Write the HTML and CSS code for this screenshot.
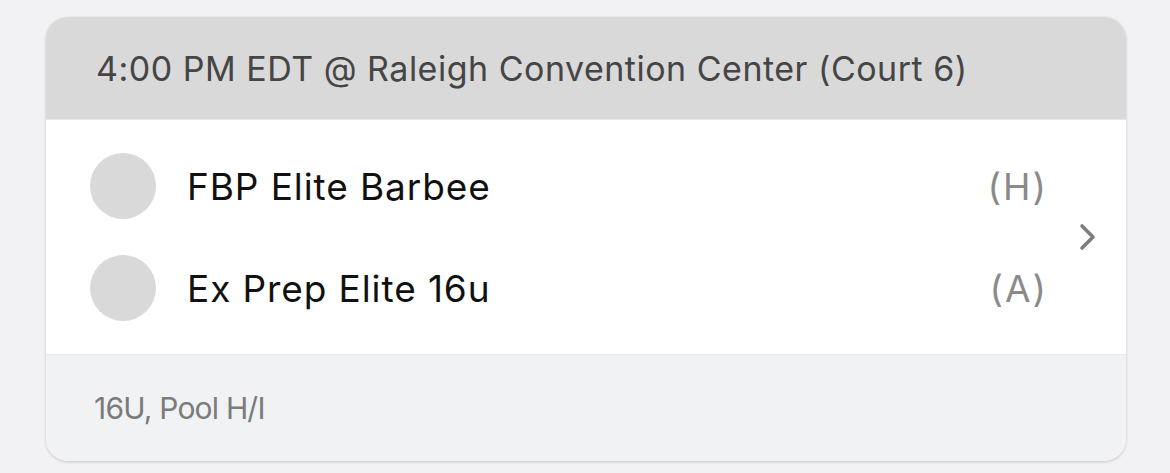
FILE: index.html
```html
<!DOCTYPE html>
<html>
<head>
<meta charset="utf-8">
<link rel="stylesheet" href="styles.css">
</head>
<body>
<div class="card">
  <div class="card-header">4:00 PM EDT @ Raleigh Convention Center (Court 6)</div>
  <div class="card-body">
    <div class="teams">
      <div class="team">
        <span class="avatar"></span>
        <span class="name">FBP Elite Barbee</span>
        <span class="side">(H)</span>
      </div>
      <div class="team">
        <span class="avatar"></span>
        <span class="name">Ex Prep Elite 16u</span>
        <span class="side">(A)</span>
      </div>
    </div>
    <svg class="chevron" width="20" height="30" viewBox="0 0 20 30"><path d="M4 4 L15 15 L4 26" fill="none" stroke="#7d7d7d" stroke-width="3.6" stroke-linecap="round" stroke-linejoin="round"/></svg>
  </div>
  <div class="card-footer">16U, Pool H/I</div>
</div>
</body>
</html>
```
FILE: styles.css
```css
html, body {
  margin: 0;
  padding: 0;
  background: #f2f2f4;
  font-family: "Inter", "Lato", sans-serif;
}
body {
  padding: 17px 44px 0 46px;
  height: 473px;
  box-sizing: border-box;
}
.card {
  width: 1080px;
  border-radius: 22px;
  overflow: hidden;
  background: #fff;
  box-shadow: 0 1px 3px rgba(0,0,0,0.18), 0 0 1px rgba(0,0,0,0.12);
}
.card-header {
  height: 103px;
  background: #d9d9d9;
  border-bottom: 1px solid #e6e6e6;
  box-sizing: border-box;
  padding-left: 50px;
  display: flex;
  align-items: center;
  font-size: 34px;
  letter-spacing: 0.5px;
  color: #454545;
}
.card-body {
  height: 235px;
  display: flex;
  align-items: center;
  border-bottom: 1px solid #ebebed;
  box-sizing: border-box;
  padding: 0 28px 0 44px;
}
.teams {
  flex: 1;
  display: flex;
  flex-direction: column;
  gap: 36px;
  padding-right: 32px;
}
.team {
  display: flex;
  align-items: center;
  height: 66px;
}
.avatar {
  width: 66px;
  height: 66px;
  border-radius: 50%;
  background: #d9d9d9;
  flex: none;
}
.name {
  flex: 1;
  margin-left: 31px;
  font-size: 37px;
  letter-spacing: 0.9px;
  color: #111;
}
.side {
  font-size: 37px;
  letter-spacing: 2px;
  margin-right: -2px;
  color: #8a8a8a;
}
.chevron {
  flex: none;
}
.card-footer {
  height: 106px;
  background: #f1f2f4;
  display: flex;
  align-items: center;
  padding-left: 48px;
  font-size: 30px;
  letter-spacing: -0.8px;
  color: #7b7b7b;
}
```
